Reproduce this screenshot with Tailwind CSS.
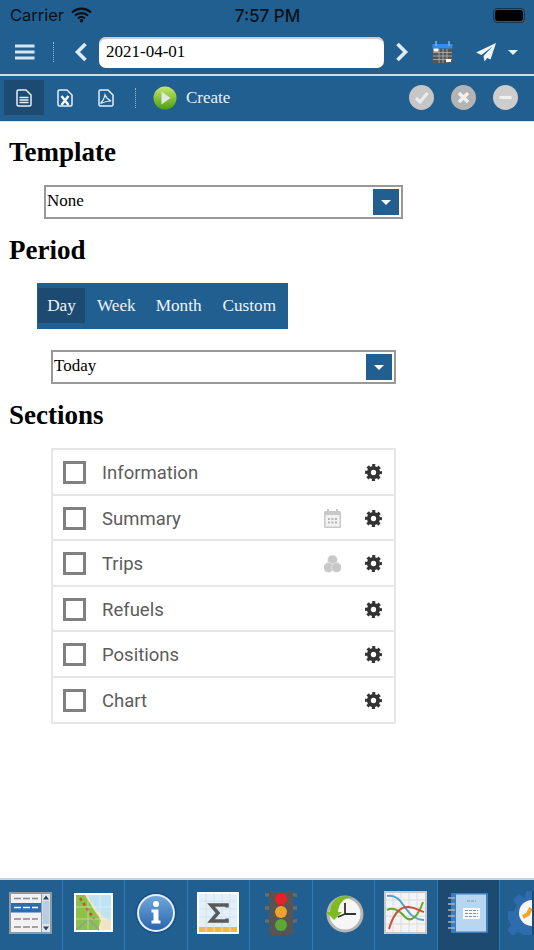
<!DOCTYPE html>
<html lang="en">
<head>
    <meta charset="UTF-8">
    <meta name="viewport" content="width=device-width, initial-scale=1.0">
    <title>Report</title>
    <script src="https://cdn.jsdelivr.net/npm/@tailwindcss/browser@4"></script>
</head>
<body class="bg-white">
<svg class="hidden" width="0" height="0">
    <symbol id="gear" viewBox="0 0 24 24">
        <circle cx="12" cy="12" r="6.500" fill="none" stroke="#333" stroke-width="5.500"/>
        <circle cx="12" cy="12" r="10" fill="none" stroke="#333" stroke-width="4" stroke-dasharray="4.300 3.554" stroke-dashoffset="2.150"/>
    </symbol>
</svg>
<div class="w-[534px] h-[950px] overflow-hidden flex flex-col font-['Liberation_Serif',serif]">

    <!-- status bar -->
    <div class="h-[30px] bg-[#215f90] flex items-center justify-between pl-[10px] pr-[9px] font-['Inter',sans-serif] text-[16.500px] text-[#08111a]">
        <div class="flex items-center gap-[7px] w-[120px]">
            <span>Carrier</span>
            <svg width="21" height="16" viewBox="0 0 21 16"><path d="M1 5.500C6.500 .5 14.500 .5 20 5.500M4 8.500C7.500 5.300 13.500 5.300 17 8.500M7 11.300C9 9.700 12 9.700 14 11.300" fill="none" stroke="#08111a" stroke-width="2.300"/><circle cx="10.500" cy="13.700" r="1.800" fill="#08111a"/></svg>
        </div>
        <span class="font-medium text-[17px] pt-[3px]">7:57 PM</span>
        <div class="w-[120px] flex justify-end">
            <div class="w-[32px] h-[15px] rounded-[4px] border border-[#0d3557] p-[1px]"><div class="w-full h-full rounded-[3px] bg-black"></div></div>
        </div>
    </div>

    <!-- date bar -->
    <div class="h-[44px] bg-[#215f90] flex items-center">
        <button class="w-[53px] h-full flex items-center pl-[15px]">
            <svg width="20" height="16" viewBox="0 0 20 16"><path d="M0 2h19.500M0 8h19.500M0 14h19.500" stroke="#d7e6f1" stroke-width="2.800"/></svg>
        </button>
        <div class="w-px h-[20px] border-l border-dotted border-[#8fb9d8]"></div>
        <svg class="ml-[20px]" width="14" height="20" viewBox="0 0 14 20"><path d="M11.500 2L3.500 10l8 8" fill="none" stroke="#dcebf5" stroke-width="3.600"/></svg>
        <div class="ml-[11px] w-[285px] h-[31px] rounded-[7px] bg-white shadow-[inset_0_2px_1px_#c9c9c9] pl-[7px] leading-[29px] text-[17px] text-black">2021-04-01</div>
        <svg class="ml-[11px]" width="14" height="20" viewBox="0 0 14 20"><path d="M2.500 2l8 8-8 8" fill="none" stroke="#dcebf5" stroke-width="3.600"/></svg>
        <svg class="ml-[23px]" width="21" height="23" viewBox="0 0 21 23">
            <rect x="0.500" y="3" width="20" height="19.500" rx="1" fill="#555"/>
            <rect x="0.500" y="3" width="20" height="4.500" fill="#2f8fe8"/>
            <rect x="1.500" y="7.500" width="5" height="3" fill="#fff"/>
            <path d="M1 11.500h19M1 15h19M1 18.500h19M7 8v14M11 8v14M15 8v14" stroke="#b5b5b5" stroke-width="0.800"/>
            <rect x="14" y="18" width="5" height="3" fill="#fff"/>
            <path d="M4 0v5M17 0v5" stroke="#7fb4dd" stroke-width="1.500"/>
        </svg>
        <svg class="ml-[23px]" width="20" height="19" viewBox="0 0 20 19"><path d="M20 0L0 9.500l5.500 2.500L17 3 7.500 13l1 5.500 2.700-3.500 3.300 1.500z" fill="#f2f7fb"/></svg>
        <div class="ml-[12px] w-0 h-0 border-x-[5px] border-x-transparent border-t-[5px] border-t-[#e6f0f7]"></div>
    </div>

    <div class="h-[2px] bg-[#c9dfee]"></div>

    <!-- action bar -->
    <div class="h-[46px] bg-[#215f90] flex items-center pl-[4px] pb-[2px] border-b border-[#cfe3f1]">
        <div class="w-[40px] h-[35px] bg-[#1c4a70] flex items-center justify-center">
            <svg width="16" height="18" viewBox="0 0 16 18"><path d="M1 2.500a1.500 1.500 0 0 1 1.500-1.500h7.500l5 5v9.500a1.500 1.500 0 0 1-1.500 1.500h-11a1.500 1.500 0 0 1-1.500-1.500z" fill="none" stroke="#e4eff7" stroke-width="1.500"/><path d="M3.500 8.500h9M3.500 11h9M3.500 13.500h9" stroke="#e4eff7" stroke-width="1.300"/></svg>
        </div>
        <div class="w-[41px] flex justify-center">
            <svg width="16" height="18" viewBox="0 0 16 18"><path d="M1 2.500a1.500 1.500 0 0 1 1.500-1.500h7.500l5 5v9.500a1.500 1.500 0 0 1-1.500 1.500h-11a1.500 1.500 0 0 1-1.500-1.500z" fill="none" stroke="#e4eff7" stroke-width="1.500"/><path d="M4.500 7l7 9M11.500 7l-7 9" stroke="#f5fafd" stroke-width="2.400"/></svg>
        </div>
        <div class="w-[41px] flex justify-center">
            <svg width="16" height="18" viewBox="0 0 16 18"><path d="M1 2.500a1.500 1.500 0 0 1 1.500-1.500h7.500l5 5v9.500a1.500 1.500 0 0 1-1.500 1.500h-11a1.500 1.500 0 0 1-1.500-1.500z" fill="none" stroke="#e4eff7" stroke-width="1.500"/><path d="M7 6c-.5 3-2 6-4.500 8.500C6 13 9 12 13 12c-3-1.500-5-3.500-6-6z" fill="none" stroke="#e4eff7" stroke-width="1.200"/></svg>
        </div>
        <div class="ml-[9px] w-px h-[20px] border-l border-dotted border-[#8fb9d8]"></div>
        <svg class="ml-[17px]" width="24" height="24" viewBox="0 0 24 24">
            <defs><linearGradient id="g" x1="0" y1="0" x2="0" y2="1"><stop offset="0" stop-color="#c4e86a"/><stop offset="1" stop-color="#4f9d12"/></linearGradient></defs>
            <circle cx="12" cy="12" r="11.500" fill="url(#g)"/>
            <path d="M8.500 5.500l9 6.500-9 6.500z" fill="#dfe8e4"/>
        </svg>
        <span class="ml-[9px] text-[17px] text-[#e8f1f7]">Create</span>
        <div class="ml-auto mr-[16px] flex gap-[17px]">
            <svg width="25" height="25" viewBox="0 0 25 25"><circle cx="12.500" cy="12.500" r="12.500" fill="#c6c6c6"/><path d="M7 13l4 4 7.500-9" fill="none" stroke="#ececec" stroke-width="3.200"/></svg>
            <svg width="25" height="25" viewBox="0 0 25 25"><circle cx="12.500" cy="12.500" r="12.500" fill="#b4b4b4"/><path d="M8 8l9 9M17 8l-9 9" stroke="#f0f0f0" stroke-width="3.400"/></svg>
            <svg width="25" height="25" viewBox="0 0 25 25"><circle cx="12.500" cy="12.500" r="12.500" fill="#cdcdcd"/><path d="M6.500 12.500h12" stroke="#f0f0f0" stroke-width="3.200"/></svg>
        </div>
    </div>

    <!-- form -->
    <main class="flex-1 pl-[9px] text-black">
        <h2 class="mt-[15px] text-[27px] leading-[30px] font-bold">Template</h2>
        <div class="mt-[18px] ml-[35px] w-[359px] h-[34px] border-2 border-[#999] flex items-center justify-between pl-[1px] pr-[2px]">
            <span class="text-[17px] -mt-[3px]">None</span>
            <div class="w-[26px] h-[26px] bg-[#215f90] flex items-center justify-center"><div class="w-0 h-0 border-x-[5px] border-x-transparent border-t-[5px] border-t-white"></div></div>
        </div>
        <h2 class="mt-[16px] text-[27px] leading-[30px] font-bold">Period</h2>
        <div class="mt-[18px] ml-[28px] w-[251px] h-[46px] bg-[#215f90] flex items-start pt-[5px] pl-[1px] text-[17.200px] text-[#edf4f9]">
            <div class="w-[47px] h-[35px] bg-[#1c4a70] text-center leading-[35px]">Day</div>
            <div class="ml-[12px] leading-[35px]">Week</div>
            <div class="ml-[20px] leading-[35px]">Month</div>
            <div class="ml-[21px] leading-[35px]">Custom</div>
        </div>
        <div class="mt-[21px] ml-[42px] w-[345px] h-[34px] border-2 border-[#999] flex items-center justify-between pl-[1px] pr-[2px]">
            <span class="text-[17px] -mt-[3px]">Today</span>
            <div class="w-[26px] h-[26px] bg-[#215f90] flex items-center justify-center"><div class="w-0 h-0 border-x-[5px] border-x-transparent border-t-[5px] border-t-white"></div></div>
        </div>
        <h2 class="mt-[16px] text-[27px] leading-[30px] font-bold">Sections</h2>

        <ul class="mt-[18px] ml-[42px] w-[345px] border-2 border-[#e6e6e6] font-['Roboto',sans-serif] text-[18.500px] text-[#5c5c5c]">
            <li class="h-[45.500px] pt-[2px] flex items-center border-b-2 border-[#e6e6e6]">
                <span class="ml-[10px] w-[23px] h-[23px] border-[3px] border-[#808080]"></span>
                <span class="ml-[16px] mt-[3px]">Information</span>
                <svg class="ml-auto mr-[12px]" width="17" height="17"><use href="#gear"/></svg>
            </li>
            <li class="h-[45.500px] pt-[2px] flex items-center border-b-2 border-[#e6e6e6]">
                <span class="ml-[10px] w-[23px] h-[23px] border-[3px] border-[#808080]"></span>
                <span class="ml-[16px] mt-[3px]">Summary</span>
                <svg class="ml-auto mr-[24px]" width="17" height="19" viewBox="0 0 17 19">
                    <path d="M4 0v3M13 0v3" stroke="#c8c8c8" stroke-width="2"/>
                    <rect x="0" y="2" width="17" height="17" rx="1.500" fill="#c8c8c8"/>
                    <rect x="1.500" y="6" width="14" height="11.500" fill="#f2f2f2"/>
                    <path d="M4 9h2v2H4zM7.500 9h2v2h-2zM11 9h2v2h-2zM4 12.500h2v2H4zM7.500 12.500h2v2h-2zM11 12.500h2v2h-2z" fill="#b5b5b5"/>
                </svg>
                <svg class="mr-[12px]" width="17" height="17"><use href="#gear"/></svg>
            </li>
            <li class="h-[45.500px] pt-[2px] flex items-center border-b-2 border-[#e6e6e6]">
                <span class="ml-[10px] w-[23px] h-[23px] border-[3px] border-[#808080]"></span>
                <span class="ml-[16px] mt-[3px]">Trips</span>
                <svg class="ml-auto mr-[24px]" width="17" height="18" viewBox="0 0 17 18" fill="#c8c8c8" stroke="#f2f2f2" stroke-width="0.600"><circle cx="8.500" cy="5" r="5"/><circle cx="4.500" cy="12.500" r="5"/><circle cx="12.500" cy="12.500" r="5"/></svg>
                <svg class="mr-[12px]" width="17" height="17"><use href="#gear"/></svg>
            </li>
            <li class="h-[45.500px] pt-[2px] flex items-center border-b-2 border-[#e6e6e6]">
                <span class="ml-[10px] w-[23px] h-[23px] border-[3px] border-[#808080]"></span>
                <span class="ml-[16px] mt-[3px]">Refuels</span>
                <svg class="ml-auto mr-[12px]" width="17" height="17"><use href="#gear"/></svg>
            </li>
            <li class="h-[45.500px] pt-[2px] flex items-center border-b-2 border-[#e6e6e6]">
                <span class="ml-[10px] w-[23px] h-[23px] border-[3px] border-[#808080]"></span>
                <span class="ml-[16px] mt-[3px]">Positions</span>
                <svg class="ml-auto mr-[12px]" width="17" height="17"><use href="#gear"/></svg>
            </li>
            <li class="h-[44.500px] pt-[2px] flex items-center">
                <span class="ml-[10px] w-[23px] h-[23px] border-[3px] border-[#808080]"></span>
                <span class="ml-[16px] mt-[3px]">Chart</span>
                <svg class="ml-auto mr-[12px]" width="17" height="17"><use href="#gear"/></svg>
            </li>
        </ul>
    </main>

    <!-- bottom tabs -->
    <nav class="h-[72px] shrink-0 bg-[#215f90] border-t-2 border-[#c3d3df] flex">
        <div class="w-[62.500px] shrink-0 border-r border-[#2f7db8] flex items-center justify-center pb-[5px]">
            <svg width="43" height="42" viewBox="0 0 43 42">
                <rect x="0" y="0" width="43" height="42" fill="#8e9aa5"/>
                <rect x="2" y="2" width="30" height="38" fill="#f2f2f2"/>
                <rect x="2" y="11" width="30" height="9.500" fill="#2d6cae"/>
                <path d="M5 6.500h24M5 27h24M5 35h24" stroke="#8a8a8a" stroke-width="1.500" stroke-dasharray="7 2"/>
                <path d="M5 15.500h24" stroke="#fff" stroke-width="1.500" stroke-dasharray="7 2"/>
                <rect x="33" y="2" width="8" height="38" fill="#dfe6ed"/>
                <rect x="33.500" y="9" width="7" height="23" fill="#b9cde0"/>
                <path d="M37 3.500l3 4h-6zM37 38.500l3-4h-6z" fill="#2a4560"/>
            </svg>
        </div>
        <div class="w-[62.500px] shrink-0 border-r border-[#2f7db8] flex items-center justify-center pb-[5px]">
            <svg width="39" height="39" viewBox="0 0 39 39">
                <rect width="39" height="39" fill="#fff"/>
                <rect x="2" y="2" width="35" height="35" fill="#bfe3f2"/>
                <path d="M2 2h11l9 14 9 9 6 3v9H2z" fill="#f2e3c2"/>
                <path d="M2 2h9l9 15 7 10-3 10H2z" fill="#8cc14a"/>
                <path d="M2 37l13-11 10 11" fill="none" stroke="#8f9aa3" stroke-width="1.500"/>
                <path d="M6 5l14 21" fill="none" stroke="#d04a2a" stroke-width="2.400" stroke-dasharray="3 3"/>
                <path d="M14 2v35M26 2v35M2 14h35M2 26h35" stroke="#ffffff" stroke-opacity="0.400"/>
            </svg>
        </div>
        <div class="w-[62.500px] shrink-0 border-r border-[#2f7db8] flex items-center justify-center pb-[5px]">
            <svg width="42" height="42" viewBox="0 0 42 42">
                <defs><linearGradient id="i" x1="0" y1="0" x2="0" y2="1"><stop offset="0" stop-color="#6fa6dc"/><stop offset="1" stop-color="#2a66ad"/></linearGradient></defs>
                <circle cx="21" cy="21" r="20.500" fill="#174f8c"/>
                <circle cx="21" cy="21" r="19" fill="#e6eff8"/>
                <circle cx="21" cy="21" r="17" fill="url(#i)"/>
                <circle cx="21" cy="12" r="3" fill="#fff"/>
                <path d="M16.500 17.500h7v11h2v3h-9v-3h2v-8h-2z" fill="#fff"/>
            </svg>
        </div>
        <div class="w-[62.500px] shrink-0 border-r border-[#2f7db8] flex items-center justify-center pb-[5px]">
            <svg width="42" height="42" viewBox="0 0 42 42">
                <rect width="42" height="42" fill="#fff"/>
                <rect x="2" y="2" width="38" height="38" fill="#e4f1fa"/>
                <rect x="2" y="35" width="38" height="5" fill="#f5b648"/>
                <path d="M9 2v38M17 2v38M25 2v38M33 2v38M2 9h38M2 17h38M2 25h38" stroke="#cfe2f0"/>
                <path d="M30 15.500V13H14l7 8-7 8h16v-2.500" fill="none" stroke="#5a5a5a" stroke-width="3.500"/>
            </svg>
        </div>
        <div class="w-[62.500px] shrink-0 border-r border-[#2f7db8] flex items-center justify-center pb-[5px]">
            <svg width="32" height="44" viewBox="0 0 32 44">
                <path d="M0 4h6M0 17h6M0 30h6M26 4h6M26 17h6M26 30h6" stroke="#6b6b6b" stroke-width="3.500"/>
                <rect x="4" y="0" width="24" height="44" rx="2" fill="#555"/>
                <circle cx="16" cy="8" r="6" fill="#ea2027"/>
                <circle cx="16" cy="21" r="6" fill="#f7a12a"/>
                <circle cx="16" cy="34" r="6" fill="#5da832"/>
            </svg>
        </div>
        <div class="w-[62.500px] shrink-0 border-r border-[#2f7db8] flex items-center justify-center pb-[5px]">
            <svg width="42" height="40" viewBox="0 0 42 40">
                <circle cx="23" cy="21" r="18.500" fill="#b5b5b5"/>
                <circle cx="23" cy="21" r="15.500" fill="#f6f6f6"/>
                <path d="M23 21V10M23 21h11M23 21l-7 3" stroke="#333" stroke-width="1.800"/>
                <path d="M8 19C8 9 16 2 25 3c4 .5 6 2 6 2-8-1-14 4-15 14h4l-8 8-8-8z" fill="#7dbb23"/>
            </svg>
        </div>
        <div class="w-[62.500px] shrink-0 border-r border-[#2f7db8] flex items-center justify-center pb-[5px]">
            <svg width="43" height="43" viewBox="0 0 43 43">
                <rect width="43" height="43" fill="#c9c9c9"/>
                <rect x="2" y="2" width="39" height="39" fill="#f4f4f4"/>
                <path d="M9 2v39M17 2v39M25 2v39M33 2v39M2 9h39M2 17h39M2 25h39M2 33h39" stroke="#dcdcdc"/>
                <path d="M3 5c10-2 14 6 20 14 5 7 10 10 17 10" fill="none" stroke="#4da3d4" stroke-width="2"/>
                <path d="M3 19c6-3 12 0 18 7 7 7 14-3 18-15" fill="none" stroke="#6aa52f" stroke-width="2"/>
                <path d="M5 38c4-14 10-23 20-22 8 1 11 4 15 5" fill="none" stroke="#c9503f" stroke-width="2"/>
            </svg>
        </div>
        <div class="w-[62.500px] shrink-0 bg-[#1c4a70] border-r border-[#2f7db8] flex items-center justify-center pb-[5px]">
            <svg width="40" height="40" viewBox="0 0 40 40">
                <rect x="3" y="0" width="37" height="40" rx="1" fill="#3d7fbc"/>
                <rect x="8" y="1.500" width="30" height="37" fill="#b9d6f0"/>
                <rect x="15" y="15" width="17" height="11" fill="#f6f8fa"/>
                <path d="M17 17.500h13M17 20.500h13M17 23.500h13M19 8h9" stroke="#8493a3" stroke-width="1" stroke-dasharray="3 1"/>
                <path d="M0 5h7M0 11h7M0 17h7M0 23h7M0 29h7M0 35h7" stroke="#a9b2bb" stroke-width="1.500"/>
            </svg>
        </div>
        <div class="w-[34px] shrink-0 overflow-hidden flex items-center pl-[8px] pb-[5px]">
            <svg class="shrink-0" width="44" height="44" viewBox="0 0 44 44">
                <path d="M18 0h8v6l6 3 5-4 6 6-4 5 3 6h4v8h-6l-3 6 4 5-6 6-5-4-6 3v4h-8v-6l-6-3-5 4-6-6 4-5-3-6H0v-8h6l3-6-4-5 6-6 5 4 2-3z" fill="#2f6cae"/>
                <circle cx="24" cy="22" r="13" fill="#f3f6f9"/>
                <path d="M15 26l5-3 3-6" fill="none" stroke="#f3a521" stroke-width="4"/>
                <rect x="24" y="0" width="20" height="44" fill="#1c4a70"/>
            </svg>
        </div>
    </nav>
</div>
</body>
</html>
